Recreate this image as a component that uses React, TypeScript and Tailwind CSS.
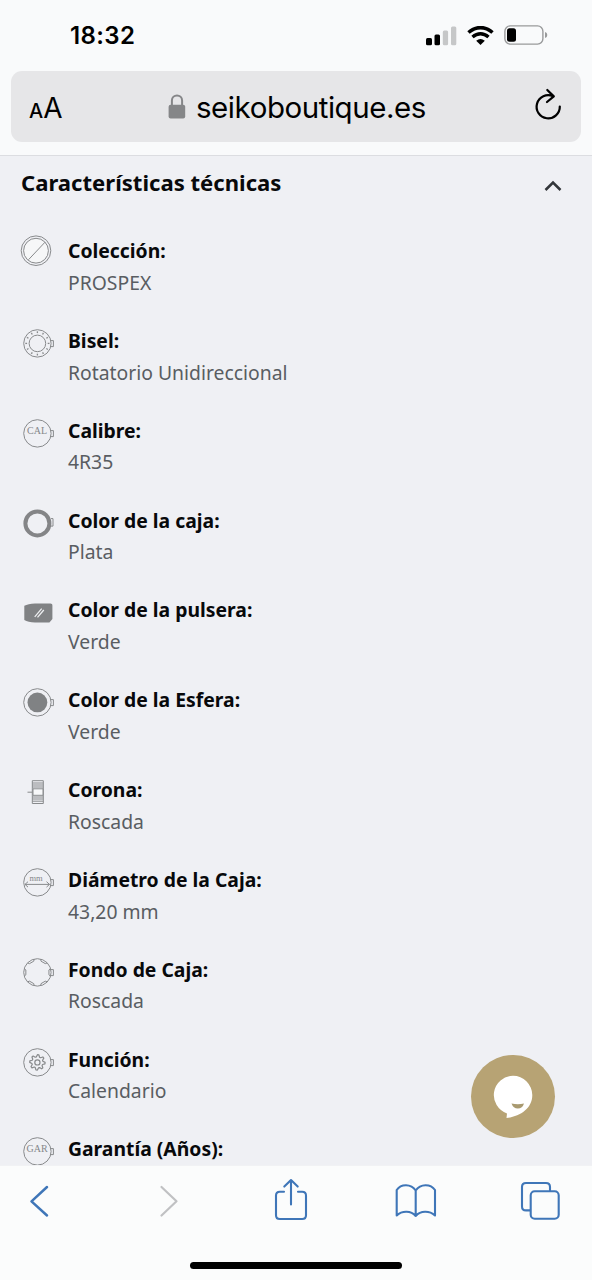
import type { ReactNode } from "react";

interface Spec {
  label: string;
  value?: string;
  icon: ReactNode;
}

const CX = 17.4;
const CY = 18.4;

function polar(radius: number, degrees: number) {
  const a = (degrees * Math.PI) / 180;
  return [CX + radius * Math.cos(a), CY + radius * Math.sin(a)];
}

/* Round watch case with the crown on its right side */
function Case({ children }: { children?: ReactNode }) {
  return (
    <>
      <circle cx={CX} cy={CY} r="13.7" />
      <path d="M30.7 15.6h2.7v6h-2.7" />
      {children}
    </>
  );
}

function CaseText({ children }: { children: string }) {
  return (
    <text
      x={CX - 0.4}
      y="19"
      textAnchor="middle"
      fontSize="10"
      fill="#85878a"
      stroke="none"
      className="font-['Liberation_Serif',serif]"
    >
      {children}
    </text>
  );
}

function BezelIcon() {
  return (
    <Case>
      <circle cx={CX} cy={CY} r="8.3" />
      {Array.from({ length: 12 }, (_, i) => {
        const [x1, y1] = polar(10.3, i * 30);
        const [x2, y2] = polar(12.1, i * 30);
        return <path key={i} d={`M${x1} ${y1}L${x2} ${y2}`} strokeWidth="1.3" />;
      })}
    </Case>
  );
}

function GearIcon() {
  const points = Array.from({ length: 32 }, (_, i) => {
    const outer = i % 4 < 2;
    return polar(outer ? 7.7 : 5.6, i * 11.25).join(",");
  }).join(" ");
  return (
    <Case>
      <polygon points={points} strokeLinejoin="round" strokeWidth="1.2" />
      <circle cx={CX} cy={CY} r="2.6" strokeWidth="1.2" />
    </Case>
  );
}

function CaseBackIcon() {
  return (
    <Case>
      {[0, 60, 120, 180, 240, 300].map((deg) => {
        const [x1, y1] = polar(13.5, deg - 16);
        const [x2, y2] = polar(11.8, deg - 12);
        const [x3, y3] = polar(11.8, deg + 12);
        const [x4, y4] = polar(13.5, deg + 16);
        return <path key={deg} d={`M${x1} ${y1}L${x2} ${y2}L${x3} ${y3}L${x4} ${y4}`} />;
      })}
    </Case>
  );
}

const specs: Spec[] = [
  {
    label: "Colección:",
    value: "PROSPEX",
    icon: (
      <>
        <circle cx="16" cy="15.7" r="14.8" />
        <circle cx="16" cy="15.7" r="12.4" fill="#f6f7f8" />
        <path d="M8.5 24.7 25 7.2" />
      </>
    ),
  },
  { label: "Bisel:", value: "Rotatorio Unidireccional", icon: <BezelIcon /> },
  {
    label: "Calibre:",
    value: "4R35",
    icon: (
      <Case>
        <CaseText>CAL</CaseText>
      </Case>
    ),
  },
  {
    label: "Color de la caja:",
    value: "Plata",
    icon: (
      <>
        <circle cx={CX} cy={CY} r="12" strokeWidth="4" stroke="#848587" />
        <path d="M31 13.6h2v7.5h-2" />
      </>
    ),
  },
  {
    label: "Color de la pulsera:",
    value: "Verde",
    icon: (
      <>
        <path
          d="M4.3 11.8Q8 9.6 15 9.4h15.5q1.9 0 1.9 1.7V25l-3 3.4H15Q8 28.200 4.300 25.900Z"
          fill="#808284"
          stroke="none"
        />
        <path d="m14.700 22.900 7-8.200M17.500 23.400l6.300-7.400" stroke="#eceef0" strokeWidth="1.3" />
      </>
    ),
  },
  {
    label: "Color de la Esfera:",
    value: "Verde",
    icon: (
      <Case>
        <circle cx={CX} cy={CY} r="9.9" fill="#808284" stroke="none" />
      </Case>
    ),
  },
  {
    label: "Corona:",
    value: "Roscada",
    icon: (
      <>
        <path d="M12.300 6.700h11v22.800h-11ZM7.500 18.200h4.800M12.300 9h11M12.300 11h11M12.300 13h11M12.300 23h11M12.300 25h11M12.300 27.200h11" />
        <path d="M13 14.800h10v6.500H13Z" fill="#f7f8f9" />
      </>
    ),
  },
  {
    label: "Diámetro de la Caja:",
    value: "43,20 mm",
    icon: (
      <Case>
        <text
          x={CX - 1.4}
          y="16.800"
          textAnchor="middle"
          fontSize="8.5"
          fill="#85878a"
          stroke="none"
          className="font-['Liberation_Serif',serif]"
        >
          mm
        </text>
        <path d="M5 20.400h24.500M8 17.700l-3 2.700 3 2.700M26.500 17.700l3 2.700-3 2.700" />
      </Case>
    ),
  },
  { label: "Fondo de Caja:", value: "Roscada", icon: <CaseBackIcon /> },
  { label: "Función:", value: "Calendario", icon: <GearIcon /> },
  {
    label: "Garantía (Años):",
    icon: (
      <Case>
        <CaseText>GAR</CaseText>
      </Case>
    ),
  },
];

function StatusBar() {
  return (
    <div className="flex h-[71px] items-center justify-between pr-[44px] pl-[70px]">
      <span className="text-[24px] leading-none font-semibold tracking-[0.4px]">18:32</span>
      <div className="flex items-center">
        <svg width="31" height="20" viewBox="0 0 31 20" fill="#000">
          <rect x="0" y="12" width="6" height="7.300" rx="1.500" />
          <rect x="8.500" y="8.500" width="5.500" height="10.800" rx="1.500" />
          <rect x="16.800" y="4.500" width="5.300" height="14.800" rx="1.500" fill="#c6c7c8" />
          <rect x="25" y="0.500" width="5.300" height="18.800" rx="1.500" fill="#c6c7c8" />
        </svg>
        <svg className="ml-[10px]" width="27" height="20" viewBox="0 0 27 20" fill="none" stroke="#000">
          <path d="M1.500 6.500Q7 1.600 13.500 1.600T25.500 6.500" strokeWidth="3.600" />
          <path d="M5.500 11Q9.300 7.800 13.500 7.800T21.500 11" strokeWidth="3.400" />
          <path d="M9.200 14.700q4.300-3.400 8.600 0L13.500 19Z" fill="#000" stroke="none" />
        </svg>
        <svg className="mt-[-2px] ml-[10px]" width="44" height="20" viewBox="0 0 44 20" fill="none">
          <rect x="0.900" y="0.900" width="38" height="18.200" rx="5.300" stroke="#999a9b" strokeWidth="1.400" />
          <rect x="3" y="3.200" width="9" height="13.500" rx="2.500" fill="#000" />
          <path d="M41 7q2.300.7 2.300 3T41 13Z" fill="#999a9b" />
        </svg>
      </div>
    </div>
  );
}

function AddressBar() {
  return (
    <div className="mx-[11px] flex h-[71px] items-center rounded-[11px] bg-[#e6e6e8] pr-[19px] pl-[18px]">
      <div className="mt-[2px] flex w-[139px] items-baseline leading-none">
        <span className="text-[20px] font-medium">A</span>
        <span className="text-[28px]">A</span>
      </div>
      <div className="flex flex-1 items-center">
        <svg width="18" height="25" viewBox="0 0 18 25">
          <path d="M3.900 12V6.500C3.900-.2 14.100-.2 14.100 6.500V12" fill="none" stroke="#858688" strokeWidth="2" />
          <rect x="0.600" y="10.800" width="16.600" height="13.700" rx="2" fill="#858688" />
        </svg>
        <span className="mt-px ml-[10px] text-[29.5px] leading-[36px] tracking-[-0.450px]">seikoboutique.es</span>
      </div>
      <svg
        className="mt-[-3px]"
        width="28"
        height="34"
        viewBox="0 0 28 34"
        fill="none"
        stroke="#000"
        strokeWidth="2.200"
        strokeLinecap="round"
        strokeLinejoin="round"
      >
        <path d="M25.800 18.500A11.600 11.600 0 1 1 19 8.200M13.300 2l6.500 6.400-6.800 5.600" />
      </svg>
    </div>
  );
}

function SpecRow({ label, value, icon }: Spec) {
  return (
    <li className="flex h-[89.85px] items-start">
      <svg
        className="-mr-px shrink-0"
        width="36"
        height="36"
        viewBox="0 0 36 36"
        fill="none"
        stroke="#888a8c"
        strokeWidth="1"
      >
        {icon}
      </svg>
      <dl className="ml-[13px] text-[19.35px] leading-[31.7px]">
        <dt className="font-bold text-[#08090b]">{label}</dt>
        {value && <dd className="text-[#595d62]">{value}</dd>}
      </dl>
    </li>
  );
}

function Toolbar() {
  return (
    <nav className="flex h-[115px] shrink-0 flex-col justify-between border-t border-[#f1f2f4] bg-[#fbfcfc]">
      <svg
        width="592"
        height="74"
        viewBox="0 1166 592 74"
        fill="none"
        stroke="#3f76b8"
        strokeWidth="2.100"
        strokeLinecap="round"
        strokeLinejoin="round"
      >
        <path d="m47 1187-15.500 14.300L47 1215.500" strokeWidth="2.500" />
        <path d="m161.500 1187 15 14.300-15 14.200" stroke="#c0c1c3" strokeWidth="2.200" />
        <path d="M284 1191.800h-4.200q-3.800 0-3.800 3.800v19.600q0 3.800 3.800 3.800h22.400q3.800 0 3.800-3.800v-19.600q0-3.800-3.800-3.800H298M291 1204.500v-24M284.300 1186.600l6.700-6.600 6.700 6.600" />
        <path d="M415.700 1190.500C411 1183.500 401 1183.500 396.700 1190V1215.500C402 1210.500 411 1210.500 415.700 1216C420.500 1210.500 429.500 1210.500 435 1215.500V1190C430.500 1183.500 420.500 1183.500 415.700 1190.500V1216" />
        <path d="M530 1210.400h-4q-4 0-4-4v-19.400q0-4 4-4h20q4 0 4 4v3.500" />
        <rect x="530.700" y="1191.300" width="28" height="27.500" rx="4" />
      </svg>
      <div className="mb-[11px] ml-[190px] h-[7px] w-[212px] rounded-full bg-black" />
    </nav>
  );
}

export default function App() {
  return (
    <div className="relative flex h-[1280px] w-[592px] flex-col overflow-hidden bg-[#eff0f4] font-['Noto_Sans',sans-serif] text-black">
      <header className="h-[156px] shrink-0 border-b border-[#dcdde1] bg-[#f9fafb] font-['Inter',sans-serif]">
        <StatusBar />
        <AddressBar />
      </header>

      <main className="min-h-0 flex-1 overflow-hidden">
        <div className="flex h-[79px] items-start justify-between pt-[11px] pr-[30px] pl-[21px]">
          <h2 className="text-[22.1px] leading-[30px] font-bold text-[#08090b]">Características técnicas</h2>
          <svg className="mt-[13px]" width="18" height="12" viewBox="0 0 18 12" fill="none" stroke="#33363a" strokeWidth="2.500">
            <path d="m1.500 10 7.500-7.500 7.500 7.500" />
          </svg>
        </div>
        <ul className="pl-[20px]">
          {specs.map((spec) => (
            <SpecRow key={spec.label} {...spec} />
          ))}
        </ul>
      </main>

      <Toolbar />

      <button
        className="absolute top-[1055px] left-[471px] flex h-[83px] w-[84px] items-center justify-center rounded-full bg-[#b7a374]"
        aria-label="Chat"
      >
        <svg width="40" height="44" viewBox="0 0 40 44">
          <path d="M20 .8a19.300 19.300 0 0 0-6 37.600L13.500 43C27 41.500 39.300 33.500 39.300 20A19.300 19.300 0 0 0 20 .8Z" fill="#fff" />
          <path d="M18.500 28.500q6.500 1.500 12.500 0-1.500 5-6.200 5-4.500 0-6.300-5Z" fill="#a99a70" />
        </svg>
      </button>
    </div>
  );
}
